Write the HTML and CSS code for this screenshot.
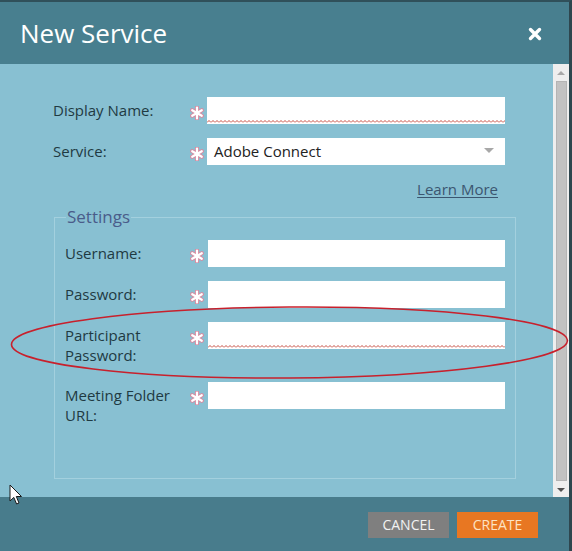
FILE: index.html
```html
<!DOCTYPE html>
<html>
<head>
<meta charset="utf-8">
<link rel="stylesheet" href="styles.css">
</head>
<body>
<svg class="defs" width="0" height="0" aria-hidden="true">
  <defs>
    <pattern id="zig" width="4" height="3" patternUnits="userSpaceOnUse">
      <path d="M0 2.5 L2 0.5 L4 2.5" stroke="#c0392b" stroke-width="0.9" fill="none"/>
    </pattern>
    <g id="star">
      <g stroke="#d88aa0" stroke-width="4.2" stroke-linecap="round">
        <line x1="7" y1="1.5" x2="7" y2="12.5"/>
        <line x1="2.2" y1="4.2" x2="11.8" y2="9.8"/>
        <line x1="2.2" y1="9.8" x2="11.8" y2="4.2"/>
      </g>
      <g stroke="#ffffff" stroke-width="2.2" stroke-linecap="round">
        <line x1="7" y1="1.5" x2="7" y2="12.5"/>
        <line x1="2.2" y1="4.2" x2="11.8" y2="9.8"/>
        <line x1="2.2" y1="9.8" x2="11.8" y2="4.2"/>
      </g>
    </g>
  </defs>
</svg>
<div class="dialog">
  <header class="hd">
    <h1 class="title">New Service</h1>
    <svg class="close" width="16" height="16" viewBox="0 0 16 16">
      <path d="M3.5 3.5 L12.5 12.5 M12.5 3.5 L3.5 12.5" stroke="#ffffff" stroke-width="3.4" stroke-linecap="round"/>
    </svg>
  </header>
  <div class="body">
    <div class="main">
      <div class="row outer">
        <span class="lbl">Display Name:</span>
        <svg class="req" width="14" height="14" viewBox="0 0 14 14"><use href="#star"/></svg>
        <div class="field"><svg class="squig" height="3"><rect width="100%" height="3" fill="url(#zig)"/></svg></div>
      </div>
      <div class="row outer">
        <span class="lbl">Service:</span>
        <svg class="req" width="14" height="14" viewBox="0 0 14 14"><use href="#star"/></svg>
        <div class="field select">Adobe Connect<span class="caret"></span></div>
      </div>
      <div class="learn"><span class="link">Learn More</span></div>
      <fieldset class="settings">
        <legend class="legend">Settings</legend>
        <div class="row inner">
          <span class="lbl">Username:</span>
          <svg class="req" width="14" height="14" viewBox="0 0 14 14"><use href="#star"/></svg>
          <div class="field"></div>
        </div>
        <div class="row inner">
          <span class="lbl">Password:</span>
          <svg class="req" width="14" height="14" viewBox="0 0 14 14"><use href="#star"/></svg>
          <div class="field"></div>
        </div>
        <div class="row inner">
          <span class="lbl">Participant<br>Password:</span>
          <svg class="req" width="14" height="14" viewBox="0 0 14 14"><use href="#star"/></svg>
          <div class="field"><svg class="squig" height="3"><rect width="100%" height="3" fill="url(#zig)"/></svg></div>
        </div>
        <div class="row inner">
          <span class="lbl">Meeting Folder<br>URL:</span>
          <svg class="req" width="14" height="14" viewBox="0 0 14 14"><use href="#star"/></svg>
          <div class="field"></div>
        </div>
      </fieldset>
    </div>
    <div class="scroll">
      <span class="arrow up"></span>
      <div class="thumb"></div>
      <span class="arrow down"></span>
    </div>
  </div>
  <footer class="ft">
    <span class="btn cancel">CANCEL</span>
    <span class="btn create">CREATE</span>
  </footer>
  <svg class="ellipse" width="572" height="551" viewBox="0 0 572 551">
    <ellipse cx="289.5" cy="342.5" rx="278" ry="35.5" transform="rotate(-0.4 289.5 342.5)" fill="none" stroke="#c8202c" stroke-width="1.6"/>
  </svg>
  <svg class="cursor" width="14" height="22" viewBox="0 0 14 22">
    <path d="M1 1 L1 17 L4.8 13.4 L7.6 20 L10 19 L7.3 12.5 L12.5 12.5 Z" fill="#ffffff" stroke="#1a1a1a" stroke-width="1" stroke-linejoin="round"/>
  </svg>
</div>
</body>
</html>
```

FILE: styles.css
```css
* { box-sizing: border-box; }
html, body { margin: 0; padding: 0; }
body {
  width: 572px;
  height: 551px;
  overflow: hidden;
  font-family: "Open Sans", "Noto Sans", sans-serif;
  background: #2f4a52;
}
.defs { position: absolute; width: 0; height: 0; }
.dialog {
  position: relative;
  width: 572px;
  height: 551px;
  border-top: 2px solid #30505a;
  border-right: 3px solid #2e464e;
  display: flex;
  flex-direction: column;
}
.hd {
  height: 62px;
  background: #487f8f;
  display: flex;
  align-items: center;
  justify-content: space-between;
  padding: 2px 26px 0 20px;
}
.title {
  margin: 0;
  font-weight: 400;
  font-size: 26px;
  color: #ffffff;
  line-height: 32px;
  padding-bottom: 2px;
}
.close { margin-top: 0; }
.body {
  height: 433px;
  display: flex;
  background: #88c0d2;
  overflow: hidden;
}
.main {
  width: 553px;
  padding: 33px 0 0 53px;
}
.row {
  display: grid;
  align-items: start;
  margin-bottom: 14px;
}
.row.outer { grid-template-columns: 136px 18px 298px; }
.row.inner { grid-template-columns: 124px 19px 297px; }
.lbl {
  font-size: 15px;
  line-height: 20px;
  color: #1f3a42;
  padding: 3px 0 3px 0;
}
.req { margin-top: 9px; margin-left: 1px; }
.field {
  position: relative;
  height: 27px;
  background: #ffffff;
  font-size: 15px;
  line-height: 27px;
  color: #222222;
  padding-left: 7px;
}
.squig {
  position: absolute;
  left: 0;
  right: 0;
  bottom: 1px;
  width: 100%;
}
.select { display: flex; justify-content: space-between; align-items: center; padding-right: 11px; }
.caret {
  width: 0;
  height: 0;
  border-left: 5px solid transparent;
  border-right: 5px solid transparent;
  border-top: 5px solid #a8a8a8;
  margin-top: -2px;
}
.learn {
  width: 452px;
  text-align: right;
  padding-right: 7px;
  margin-top: 1px;
  font-size: 15px;
  line-height: 20px;
}
.link { color: #3b5670; text-decoration: underline; text-underline-offset: 2px; }
.settings {
  margin: 7px 0 0 1px;
  width: 462px;
  border: 1px solid #a3d0de;
  padding: 12px 0 36px 10px;
}
.legend {
  margin-left: 1px;
  padding: 0 1px;
  font-size: 17px;
  line-height: 22px;
  color: #4a5c8a;
}
.scroll {
  width: 16px;
  background: #eeeeee;
  position: relative;
  display: flex;
  flex-direction: column;
  align-items: center;
}
.arrow { width: 0; height: 0; border-left: 4px solid transparent; border-right: 4px solid transparent; }
.arrow.up { border-bottom: 4px solid #a8a8a8; margin-top: 7px; }
.arrow.down { border-top: 4px solid #505050; margin-top: 7px; }
.thumb {
  width: 11px;
  height: 400px;
  margin-top: 6px;
  background: #c2c2c2;
  border: 1px solid #b4b4b4;
}
.ft {
  flex: 1;
  background: #487c8c;
  display: flex;
  justify-content: flex-end;
  align-items: flex-start;
  gap: 8px;
  padding: 15px 31px 0 0;
}
.btn {
  width: 81px;
  height: 26px;
  font-size: 14px;
  line-height: 26px;
  text-align: center;
}
.cancel { background: #7f7f7f; color: #f2f2f2; }
.create { background: #e87722; color: #fde3c4; }
.ellipse { position: absolute; left: 0; top: -2px; pointer-events: none; }
.cursor { position: absolute; left: 9px; top: 482px; }
```
